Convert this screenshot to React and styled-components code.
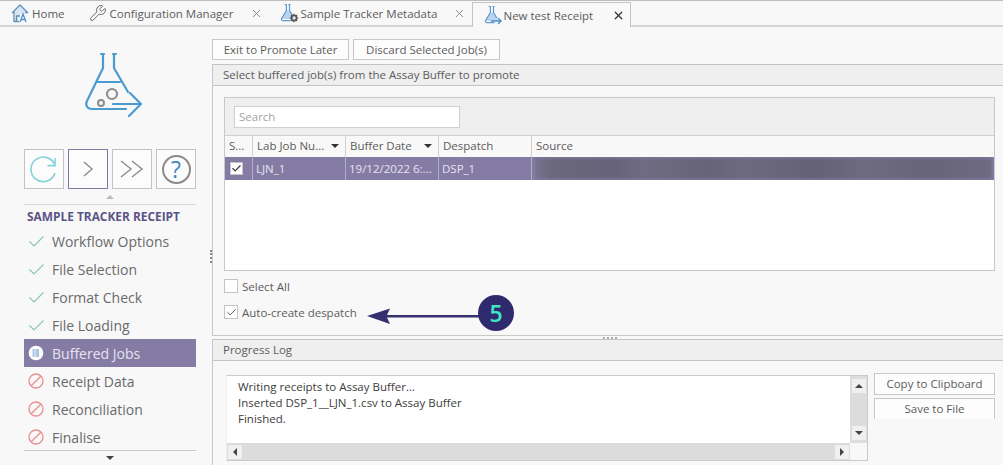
import React from 'react';
import styled, { createGlobalStyle } from 'styled-components';
import { Check, Wrench, X } from 'lucide-react';

const steps = [
  { label: 'Workflow Options', state: 'done' },
  { label: 'File Selection', state: 'done' },
  { label: 'Format Check', state: 'done' },
  { label: 'File Loading', state: 'done' },
  { label: 'Buffered Jobs', state: 'active' },
  { label: 'Receipt Data', state: 'blocked' },
  { label: 'Reconciliation', state: 'blocked' },
  { label: 'Finalise', state: 'blocked' }
];

const columns = [
  { title: 'S...', width: 28 },
  { title: 'Lab Job Nu...', width: 93, sort: true },
  { title: 'Buffer Date', width: 93, sort: true },
  { title: 'Despatch', width: 93 },
  { title: 'Source', width: 463 }
];

function LogoFlask() {
  return (
    <svg width="90" height="90" viewBox="0 0 90 90" fill="none">
      <path
        d="M31 14h3M43 14h3M33 15v13L17 61c-2 4 0 8 5 8h34M44 15v13l14 24M28 42h22"
        stroke="#4a9bd0"
        strokeWidth="2.2"
        strokeLinecap="round"
        strokeLinejoin="round"
      />
      <circle cx="42" cy="54" r="5" stroke="#8d8d8d" strokeWidth="2.2" />
      <circle cx="31" cy="63" r="3" stroke="#8d8d8d" strokeWidth="2" />
      <path
        d="M43 64h28M60 53l11 11-12 12"
        stroke="#4a9bd0"
        strokeWidth="2.2"
        strokeLinecap="round"
        strokeLinejoin="round"
      />
    </svg>
  );
}

function TabFlask({ gear }) {
  return (
    <svg width="20" height="20" viewBox="0 0 20 20" fill="none">
      <path d="M7 7.5h4l4.5 8.5H3z" fill="#b9d5ee" />
      <path
        d="M6 1.5h1.4v6L2.6 15.6c-.6 1.2 0 2 1.2 2H11M9.8 1.5h1.4M10.5 1.5v6l3 5"
        stroke="#5f9ad2"
        strokeWidth="1.2"
        strokeLinecap="round"
        strokeLinejoin="round"
      />
      {gear ? (
        <g>
          <circle cx="15" cy="15" r="2.6" stroke="#555" strokeWidth="1.8" />
          <path
            d="M15 10.8v1.4M15 17.8v1.4M10.8 15h1.4M17.8 15h1.4M12 12l1 1M17 17l1 1M18 12l-1 1M13 17l-1 1"
            stroke="#555"
            strokeWidth="1.2"
          />
        </g>
      ) : (
        <path d="M8 16h10M15 13l3 3-3 3" stroke="#4d8fd0" strokeWidth="1.4" />
      )}
    </svg>
  );
}

function HomeIcon() {
  return (
    <svg width="18" height="20" viewBox="0 0 18 20" fill="none">
      <path d="M4 8 9 3l5 5v3H9l-3 7H4z" fill="#d6e6f3" />
      <path
        d="M1 10 9 2l8 8M3 8.5V18.5h5M15 8.5v2M5.500 18v-5H9"
        stroke="#5f8fb8"
        strokeWidth="1.3"
        strokeLinejoin="round"
      />
      <path d="M9 19l3-8 3 8M10.2 16.500h3.600" stroke="#4d8fd0" strokeWidth="1.3" />
    </svg>
  );
}

function StepIcon({ state }) {
  if (state === 'done') {
    return (
      <svg width="15" height="11" viewBox="0 0 15 11" fill="none">
        <path d="M.5 5.500 5 10 14.500.5" stroke="#8cc7aa" strokeWidth="1.1" />
      </svg>
    );
  }
  if (state === 'blocked') {
    return (
      <svg width="16" height="16" viewBox="0 0 16 16" fill="none">
        <circle cx="8" cy="8" r="7" stroke="#ea8f93" strokeWidth="1.3" />
        <path d="M3.200 12.800l9.600-9.600" stroke="#ea8f93" strokeWidth="1.3" />
      </svg>
    );
  }
  return (
    <svg width="16" height="16" viewBox="0 0 16 16">
      <circle cx="8" cy="8" r="7.300" fill="#fff" />
      <path d="M4.500 4h2.200v8H4.500zM7.500 4h3.500v8H7.500z" fill="#a9c8e6" />
    </svg>
  );
}

export default function App() {
  return (
    <>
      <GlobalStyle />
      <Page>
        <TabStrip>
          <Tab $pad={11} $gap={24}>
            <HomeIcon />
            <TabLabel>Home</TabLabel>
          </Tab>
          <Tab $gap={16}>
            <Wrench size={18} color="#666" strokeWidth={1.3} />
            <TabLabel>Configuration Manager</TabLabel>
            <TabClose $gap={14}>
              <X size={13} strokeWidth={1.5} />
            </TabClose>
          </Tab>
          <Tab $gap={6} $iconGap={1}>
            <TabFlask gear />
            <TabLabel>Sample Tracker Metadata</TabLabel>
            <TabClose $gap={14}>
              <X size={13} strokeWidth={1.5} />
            </TabClose>
          </Tab>
          <ActiveTab>
            <TabFlask />
            <TabLabel>New test Receipt</TabLabel>
            <TabClose $gap={18} $dark>
              <X size={13} strokeWidth={2.2} />
            </TabClose>
          </ActiveTab>
        </TabStrip>

        <Body>
          <Sidebar>
            <LogoWrap>
              <LogoFlask />
            </LogoWrap>
            <ActionRow>
              <ActionButton>
                <svg width="28" height="28" viewBox="0 0 28 28" fill="none">
                  <path
                    d="M25 10.600A12.300 12.300 0 1 0 25 18M25 3v7.600h-7.500"
                    stroke="#84d2da"
                    strokeWidth="1.6"
                  />
                </svg>
              </ActionButton>
              <ActionButton $focused>
                <svg width="12" height="18" viewBox="0 0 12 18" fill="none">
                  <path d="M2 2l8 7-8 7" stroke="#8c8c8c" strokeWidth="1.4" />
                </svg>
              </ActionButton>
              <ActionButton>
                <svg width="24" height="18" viewBox="0 0 24 18" fill="none">
                  <path d="M1 1l10 8-10 8M12 1l10 8-10 8" stroke="#8c8c8c" strokeWidth="1.4" />
                </svg>
              </ActionButton>
              <ActionButton>
                <HelpRing>?</HelpRing>
              </ActionButton>
            </ActionRow>
            <ScrollHint>
              <Triangle $dir="up" $color="#bbb" />
            </ScrollHint>
            <StepsHead>SAMPLE TRACKER RECEIPT</StepsHead>
            <StepList>
              {steps.map(step => (
                <Step key={step.label} $active={step.state === 'active'}>
                  <StepIconBox>
                    <StepIcon state={step.state} />
                  </StepIconBox>
                  {step.label}
                </Step>
              ))}
            </StepList>
            <ScrollFoot>
              <Triangle $dir="down" $color="#444" />
            </ScrollFoot>
            <SideGrip />
          </Sidebar>

          <Main>
            <TopActions>
              <PlainButton $width={137}>Exit to Promote Later</PlainButton>
              <PlainButton $width={147}>Discard Selected Job(s)</PlainButton>
            </TopActions>

            <JobsPanel>
              <PanelHead>Select buffered job(s) from the Assay Buffer to promote</PanelHead>
              <JobsBody>
                <GridBox>
                  <SearchZone>
                    <SearchInput placeholder="Search" />
                  </SearchZone>
                  <HeadRow>
                    {columns.map(col => (
                      <HeadCell key={col.title} style={{ width: col.width }}>
                        {col.title}
                        {col.sort && <Triangle $dir="down" $color="#333" />}
                      </HeadCell>
                    ))}
                  </HeadRow>
                  <JobRow>
                    <JobCell style={{ width: columns[0].width }}>
                      <TickBox $size={13}>
                        <Check size={11} strokeWidth={2.5} color="#333" />
                      </TickBox>
                    </JobCell>
                    <JobCell style={{ width: columns[1].width }}>LJN_1</JobCell>
                    <JobCell style={{ width: columns[2].width }}>19/12/2022 6:...</JobCell>
                    <JobCell style={{ width: columns[3].width }}>DSP_1</JobCell>
                    <BlurCell>
                      <BlurredPath />
                    </BlurCell>
                  </JobRow>
                </GridBox>

                <OptionRow $top={8}>
                  <TickBox />
                  Select All
                </OptionRow>
                <OptionRow $top={12}>
                  <TickBox>
                    <Check size={11} strokeWidth={2} color="#444" />
                  </TickBox>
                  Auto-create despatch
                </OptionRow>
              </JobsBody>

              <Callout width="116" height="18" viewBox="0 0 116 18" fill="none">
                <path d="M0 8l23-7.500-3 6.500h96v2.500H20l3 6.500z" fill="#37306f" />
              </Callout>
              <Badge>5</Badge>
            </JobsPanel>

            <Splitter>
              <SplitGrip />
            </Splitter>

            <LogPanel>
              <PanelHead>Progress Log</PanelHead>
              <LogBody>
                <LogBox>
                  <LogText>
                    <div>Writing receipts to Assay Buffer...</div>
                    <div>Inserted DSP_1__LJN_1.csv to Assay Buffer</div>
                    <div>Finished.</div>
                  </LogText>
                  <VScroll>
                    <ScrollBtn>
                      <Triangle $dir="up" $color="#444" />
                    </ScrollBtn>
                    <ScrollBtn>
                      <Triangle $dir="down" $color="#444" />
                    </ScrollBtn>
                  </VScroll>
                  <HScroll>
                    <ScrollBtn>
                      <Triangle $dir="left" $color="#444" />
                    </ScrollBtn>
                    <ScrollBtn>
                      <Triangle $dir="right" $color="#444" />
                    </ScrollBtn>
                  </HScroll>
                  <ScrollCorner />
                </LogBox>
                <LogActions>
                  <LogButton>Copy to Clipboard</LogButton>
                  <LogButton $cut>Save to File</LogButton>
                </LogActions>
              </LogBody>
            </LogPanel>
          </Main>
        </Body>
      </Page>
    </>
  );
}

const font = `'Open Sans', 'Noto Sans', sans-serif`;

const GlobalStyle = createGlobalStyle`
  html, body {
    margin: 0;
    padding: 0;
    background: #f8f8f8;
  }
  * {
    box-sizing: border-box;
  }
`;

const Page = styled.div`
  width: 1003px;
  height: 465px;
  overflow: hidden;
  display: flex;
  flex-direction: column;

  background: #f8f8f8;
  color: #5c5c5c;
  font-family: ${font};
  font-size: 11.5px;
`;

const Body = styled.div`
  flex: 1;
  min-height: 0;
  display: flex;
`;

// Tabs
const TabStrip = styled.div`
  flex: none;
  height: 27px;
  display: flex;
  align-items: stretch;

  border-top: 1px solid #bdbdbd;
  border-bottom: 2px solid #d4d4d4;
`;

const Tab = styled.div`
  display: flex;
  align-items: center;
  gap: ${p => p.$iconGap ?? 3}px;

  padding-left: ${p => p.$pad || 0}px;
  padding-right: ${p => p.$gap}px;
`;

const ActiveTab = styled.div`
  display: flex;
  align-items: center;
  gap: 1px;

  height: 25px;
  margin-top: 1px;
  padding: 0 5px 0 10px;

  background: #f8f8f8;
  border: 1px solid #c4c4c4;
  border-bottom: none;
`;

const TabLabel = styled.span`
  white-space: nowrap;
`;

const TabClose = styled.span`
  display: flex;
  margin-left: ${p => p.$gap}px;
  color: ${p => (p.$dark ? '#333' : '#777')};
`;

// Sidebar
const Sidebar = styled.aside`
  position: relative;
  flex: none;
  width: 212px;
  padding-left: 24px;
`;

const LogoWrap = styled.div`
  display: flex;
  height: 103px;
  padding: 13px 0 0 46px;
`;

const ActionRow = styled.div`
  display: flex;
  gap: 4px;
  margin-top: 19px;
`;

const ActionButton = styled.div`
  width: 40px;
  height: 40px;
  display: flex;
  align-items: center;
  justify-content: center;

  background: #fcfcfc;
  border: 1px solid ${p => (p.$focused ? '#7d7aa3' : '#c2c2c2')};
`;

const HelpRing = styled.div`
  width: 29px;
  height: 29px;
  display: flex;
  align-items: center;
  justify-content: center;

  border: 2px solid #8a8a8a;
  border-radius: 50%;

  color: #3f8ac4;
  font-size: 23px;
  line-height: 1;
`;

const ScrollHint = styled.div`
  width: 172px;
  height: 16px;
  display: flex;
  align-items: center;
  justify-content: center;

  border-bottom: 1px solid #d6d6d6;
`;

const StepsHead = styled.div`
  width: 172px;
  height: 22px;
  padding-left: 3px;

  color: #5a5488;
  font-size: 11.9px;
  font-weight: 700;
  line-height: 23px;
  white-space: nowrap;
`;

const StepList = styled.div`
  width: 172px;
`;

const Step = styled.div`
  height: 28px;
  display: flex;
  align-items: center;

  background: ${p => (p.$active ? '#857ca5' : 'transparent')};
  color: ${p => (p.$active ? '#e6e3ee' : '#6a6a6a')};
  font-size: 14px;
`;

const StepIconBox = styled.span`
  flex: none;
  width: 28px;
  display: flex;
  justify-content: center;
  padding-right: 4px;
`;

const ScrollFoot = styled.div`
  width: 172px;
  height: 15px;
  display: flex;
  align-items: center;
  justify-content: center;

  margin-top: -1px;
  border-top: 1px solid #c8c8c8;
`;

const SideGrip = styled.span`
  position: absolute;
  top: 223px;
  right: 0;
  height: 13px;
  border-left: 2px dotted #888;
`;

// Main column
const Main = styled.main`
  flex: 1;
  min-width: 0;
  display: flex;
  flex-direction: column;
`;

const TopActions = styled.div`
  flex: none;
  display: flex;
  gap: 4px;
  padding-top: 12px;
  margin-bottom: 4px;
`;

const PlainButton = styled.div`
  width: ${p => p.$width}px;
  height: 21px;
  padding-bottom: 1px;
  display: flex;
  align-items: center;
  justify-content: center;

  background: #fdfdfd;
  border: 1px solid #c8c8c8;
  white-space: nowrap;
`;

const JobsPanel = styled.section`
  position: relative;
  flex: none;
  height: 272px;

  border-left: 1px solid #c8c8c8;
  border-bottom: 1px solid #c8c8c8;
`;

const PanelHead = styled.div`
  height: 22px;
  padding: 0 0 2px 10px;
  display: flex;
  align-items: center;

  background: #efefef;
  border-top: 1px solid #c4c4c4;
  border-bottom: 1px solid #c4c4c4;
`;

const JobsBody = styled.div`
  padding: 11px 8px 0 11px;
`;

const GridBox = styled.div`
  height: 174px;
  background: #fff;
  border: 1px solid #c8c8c8;
`;

const SearchZone = styled.div`
  height: 38px;
  padding: 8px 0 0 9px;
  background: #efefef;
  border-bottom: 1px solid #d0d0d0;
`;

const SearchInput = styled.input`
  display: block;
  width: 226px;
  height: 22px;
  padding: 0 4px 2px;

  background: #fff;
  border: 1px solid #cfcfcf;
  outline: none;

  font-family: ${font};
  font-size: 11.5px;

  &::placeholder {
    color: #a4a4a4;
  }
`;

const HeadRow = styled.div`
  height: 21px;
  display: flex;
  background: #f8f8f8;
`;

const HeadCell = styled.div`
  flex: none;
  display: flex;
  align-items: center;
  justify-content: space-between;
  padding: 0 6px 2px 4px;

  border-right: 1px solid #d0d0d0;
  white-space: nowrap;

  &:last-child {
    border-right: none;
  }
`;

const JobRow = styled.div`
  height: 23px;
  display: flex;

  background: #857ca5;
  color: #e6e3ee;
`;

const JobCell = styled.div`
  flex: none;
  display: flex;
  align-items: center;
  padding: 0 3px;

  border-right: 1px solid #b3adc8;
  white-space: nowrap;
`;

const BlurCell = styled.div`
  flex: 1;
  min-width: 0;
  overflow: hidden;
`;

const BlurredPath = styled.div`
  height: calc(100% - 2px);
  margin: 1px 2px 1px 3px;

  background: linear-gradient(
    90deg,
    #77738f 0,
    #6b677c 4%,
    #65627a 17%,
    #6f6b82 24%,
    #666377 38%,
    #6d697f 46%,
    #646176 61%,
    #6e6a80 72%,
    #676478 86%,
    #6e6a84 100%
  );
  filter: blur(1.5px);
`;

const OptionRow = styled.div`
  height: 14px;
  margin-top: ${p => p.$top}px;
  display: flex;
  align-items: center;
  gap: 4px;
`;

const TickBox = styled.span`
  flex: none;
  width: ${p => p.$size || 14}px;
  height: ${p => p.$size || 14}px;
  margin-left: ${p => (p.$size ? 2 : 0)}px;
  display: flex;
  align-items: center;
  justify-content: center;

  background: #fff;
  border: 1px solid #c4c4c4;
`;

const Callout = styled.svg`
  position: absolute;
  left: 154px;
  top: 244px;
`;

const Badge = styled.div`
  position: absolute;
  left: 265px;
  top: 231px;
  width: 36px;
  height: 36px;
  display: flex;
  align-items: center;
  justify-content: center;

  background: #2f2a6d;
  border-radius: 50%;

  color: #3fe6c0;
  font-size: 23px;
  font-weight: 600;
`;

const Splitter = styled.div`
  flex: none;
  height: 3px;
  display: flex;
  justify-content: center;
`;

const SplitGrip = styled.span`
  width: 14px;
  margin: 1px 0 0 5px;
  border-top: 2px dotted #aaa;
`;

const LogPanel = styled.section`
  flex: 1;
  border-left: 1px solid #c8c8c8;
`;

const LogBody = styled.div`
  display: flex;
  align-items: flex-start;
  gap: 6px;
  padding: 12px 8px 0 13px;
`;

const LogBox = styled.div`
  width: 642px;
  height: 86px;
  flex: none;
  display: grid;
  grid-template-columns: 1fr 17px;
  grid-template-rows: 1fr 17px;

  margin-top: 2px;
  background: #fff;
  border: 1px solid #cacaca;
  border-left-color: #eee;
`;

const LogText = styled.div`
  padding: 3px 0 0 11px;

  color: #3c3c3c;
  font-size: 11.5px;
  line-height: 16px;
  white-space: nowrap;
`;

const VScroll = styled.div`
  display: flex;
  flex-direction: column;
  justify-content: space-between;
  align-items: center;
  padding: 3px 0;
  background: #dcdcdc;
`;

const HScroll = styled.div`
  display: flex;
  justify-content: space-between;
  align-items: center;
  padding: 0 1px;
  background: #dcdcdc;
`;

const ScrollBtn = styled.span`
  width: 14px;
  height: 14px;
  display: flex;
  align-items: center;
  justify-content: center;
  background: #f0f0f0;
`;

const ScrollCorner = styled.div`
  background: #f8f8f8;
`;

const LogActions = styled.div`
  flex: 1;
  display: flex;
  flex-direction: column;
  gap: 3px;
`;

const LogButton = styled.div`
  height: ${p => (p.$cut ? 21 : 22)}px;
  padding-bottom: 1px;
  display: flex;
  align-items: center;
  justify-content: center;

  background: #fdfdfd;
  border: 1px solid #c8c8c8;
  border-bottom: ${p => (p.$cut ? 'none' : '1px solid #c8c8c8')};
`;

const triangles = {
  up: c => `border-width: 0 4px 4px; border-color: transparent transparent ${c};`,
  down: c => `border-width: 4px 4px 0; border-color: ${c} transparent transparent;`,
  left: c => `border-width: 4px 4px 4px 0; border-color: transparent ${c} transparent transparent;`,
  right: c => `border-width: 4px 0 4px 4px; border-color: transparent transparent transparent ${c};`
};

const Triangle = styled.span`
  flex: none;
  width: 0;
  height: 0;
  border-style: solid;
  ${p => triangles[p.$dir](p.$color)}
`;
